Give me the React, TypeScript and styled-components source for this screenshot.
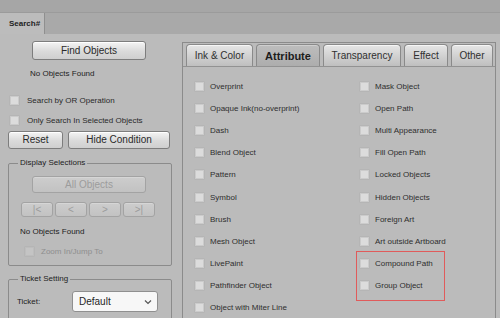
import React from 'react';
import styled, { createGlobalStyle } from 'styled-components';

const GlobalStyle = createGlobalStyle`
  html, body {
    margin: 0;
    padding: 0;
    background: #bbbbbb;
  }
  body {
    font-family: "Liberation Sans", Arial, sans-serif;
  }
`;

const Window = styled.div`
  width: 500px;
  height: 318px;
  overflow: hidden;
  background: #bbbbbb;
  display: flex;
  flex-direction: column;
  font-family: "Liberation Sans", Arial, sans-serif;
  color: #2e2e2e;
`;

const TitleStrip = styled.div`
  height: 12px;
  flex-shrink: 0;
  background: #a6a6a6;
  border-bottom: 1px solid #9b9b9b;
`;

const TabStrip = styled.div`
  height: 21px;
  flex-shrink: 0;
  background: #a9a9a9;
  display: flex;
`;

const PanelTab = styled.div`
  width: 45px;
  box-sizing: border-box;
  padding-left: 9px;
  background: #bcbcbc;
  border-right: 1px solid #8f8f8f;
  font-size: 8px;
  font-weight: bold;
  line-height: 21px;
  color: #222;
`;

const Body = styled.div`
  flex: 1;
  display: flex;
  min-height: 0;
`;

const LeftPanel = styled.div`
  width: 182px;
  flex-shrink: 0;
  padding-top: 7px;
  display: flex;
  flex-direction: column;
  align-items: flex-start;
`;

const PushButton = styled.button<{ $w: number; $h: number; $off?: boolean }>`
  width: ${(p) => p.$w}px;
  height: ${(p) => p.$h}px;
  flex-shrink: 0;
  box-sizing: border-box;
  padding: 0;
  margin: 0;
  border: 1px solid ${(p) => (p.$off ? '#a3a3a3' : '#7d7d7d')};
  border-radius: 3px;
  background: ${(p) =>
    p.$off
      ? 'linear-gradient(#cdcdcd, #c2c2c2)'
      : 'linear-gradient(#f4f4f4, #dadada 55%, #cfcfcf)'};
  box-shadow: ${(p) => (p.$off ? 'inset 0 1px 0 #d6d6d6' : 'inset 0 1px 0 #ffffff')};
  font-family: "Liberation Sans", Arial, sans-serif;
  font-size: 10px;
  line-height: 1;
  color: ${(p) => (p.$off ? '#9c9c9c' : '#2a2a2a')};
`;

const FindButton = styled(PushButton)`
  margin-left: 32px;
`;

const Note = styled.div<{ $left: number; $top: number }>`
  flex-shrink: 0;
  margin: ${(p) => p.$top}px 0 0 ${(p) => p.$left}px;
  font-size: 8px;
  line-height: 10px;
  color: #222;
`;

const CheckRow = styled.label<{ $left: number; $top: number; $gap: number; $off?: boolean }>`
  flex-shrink: 0;
  display: flex;
  align-items: center;
  height: 12px;
  margin: ${(p) => p.$top}px 0 0 ${(p) => p.$left}px;
  gap: ${(p) => p.$gap}px;
  font-size: 8px;
  color: ${(p) => (p.$off ? '#8e8e8e' : '#2a2a2a')};
  white-space: nowrap;
`;

const Box = styled.span<{ $off?: boolean }>`
  width: 9px;
  height: 9px;
  box-sizing: border-box;
  flex-shrink: 0;
  background: ${(p) => (p.$off ? '#c4c4c4' : '#dcdcdc')};
  border: 1px solid ${(p) => (p.$off ? '#bdbdbd' : '#cbcbcb')};
  box-shadow: 0 0 0 0.5px #b0b0b0;
`;

const ButtonRow = styled.div<{ $left: number; $top: number; $gap: number }>`
  flex-shrink: 0;
  display: flex;
  gap: ${(p) => p.$gap}px;
  margin: ${(p) => p.$top}px 0 0 ${(p) => p.$left}px;
`;

const Group = styled.fieldset<{ $top: number }>`
  flex-shrink: 0;
  width: 164px;
  box-sizing: border-box;
  margin: ${(p) => p.$top}px 0 0 8px;
  padding: 0 0 8px 0;
  border: 1px solid #8b8b8b;
  border-radius: 2px;
  min-inline-size: 0;
`;

const GroupTitle = styled.legend`
  margin-left: 9px;
  padding: 0 2px;
  font-size: 8px;
  line-height: 10px;
  color: #222;
`;

const GroupBody = styled.div<{ $pad: number }>`
  display: flex;
  flex-direction: column;
  align-items: flex-start;
  padding-top: ${(p) => p.$pad}px;
`;

const AllButton = styled(PushButton)`
  margin-left: 23px;
  font-size: 10px;
`;

const TicketRow = styled.div`
  display: flex;
  align-items: center;
  margin-left: 8px;
`;

const TicketLabel = styled.span`
  width: 55px;
  font-size: 8px;
  color: #222;
`;

const Select = styled.div`
  width: 86px;
  height: 21px;
  box-sizing: border-box;
  border: 1px solid #8f8f8f;
  border-radius: 3px;
  background: #f7f7f7;
  display: flex;
  align-items: center;
  justify-content: space-between;
  padding: 0 5px 0 6px;
  font-size: 10px;
  color: #262626;
`;

const RightPanel = styled.div`
  width: 314px;
  margin-top: 8px;
  box-sizing: border-box;
  border: 1px solid #8b8b8b;
  border-bottom: none;
  display: flex;
  flex-direction: column;
`;

const TabRow = styled.div`
  display: flex;
  gap: 3px;
  padding: 1px 0 0 3px;
  border-bottom: 1px solid #929292;
`;

const Tab = styled.div<{ $w: number; $on?: boolean }>`
  width: ${(p) => p.$w}px;
  height: 22px;
  box-sizing: border-box;
  border: 1px solid #8a8a8a;
  border-bottom: none;
  border-radius: 4px 4px 0 0;
  background: ${(p) =>
    p.$on ? 'linear-gradient(#bdbdbd, #adadad)' : 'linear-gradient(#e6e6e6, #d2d2d2 50%, #bfbfbf)'};
  box-shadow: inset 0 1px 0 ${(p) => (p.$on ? '#cfcfcf' : '#f6f6f6')};
  display: flex;
  align-items: center;
  justify-content: center;
  font-size: ${(p) => (p.$on ? 11 : 10)}px;
  font-weight: ${(p) => (p.$on ? 'bold' : 'normal')};
  color: ${(p) => (p.$on ? '#1c1c1c' : '#303030')};
`;

const Options = styled.div`
  display: flex;
  padding: 8px 0 0 12px;
`;

const OptionColumn = styled.div<{ $w?: number }>`
  width: ${(p) => (p.$w ? `${p.$w}px` : 'auto')};
  display: flex;
  flex-direction: column;
`;

const Option = styled.label`
  height: 22.2px;
  flex-shrink: 0;
  display: flex;
  align-items: center;
  gap: 6px;
  font-size: 8px;
  color: #2e2e2e;
  white-space: nowrap;
`;

const Highlight = styled.div`
  position: relative;
  &::before {
    content: '';
    position: absolute;
    left: -4px;
    top: -1.5px;
    width: 87px;
    bottom: -4px;
    border: 1px solid #e05b5b;
    pointer-events: none;
  }
`;

const Chevron = () => (
  <svg width="8" height="6" viewBox="0 0 8 6">
    <path d="M1 1.5 L4 4.5 L7 1.5" fill="none" stroke="#555" strokeWidth="1.2" />
  </svg>
);

const leftOptions = [
  'Overprint',
  'Opaque Ink(no-overprint)',
  'Dash',
  'Blend Object',
  'Pattern',
  'Symbol',
  'Brush',
  'Mesh Object',
  'LivePaint',
  'Pathfinder Object',
  'Object with Miter Line',
];

const rightOptions = [
  'Mask Object',
  'Open Path',
  'Multi Appearance',
  'Fill Open Path',
  'Locked Objects',
  'Hidden Objects',
  'Foreign Art',
  'Art outside Artboard',
];

const marked = ['Compound Path', 'Group Object'];

const App: React.FC = () => {
  return (
    <Window>
      <GlobalStyle />
      <TitleStrip />
      <TabStrip>
        <PanelTab>Search#</PanelTab>
      </TabStrip>
      <Body>
        <LeftPanel>
          <FindButton $w={114} $h={19}>Find Objects</FindButton>
          <Note $left={30} $top={9}>No Objects Found</Note>
          <CheckRow $left={10} $top={15} $gap={8}>
            <Box />
            Search by OR Operation
          </CheckRow>
          <CheckRow $left={10} $top={8} $gap={8}>
            <Box />
            Only Search In Selected Objects
          </CheckRow>
          <ButtonRow $left={8} $top={5} $gap={5}>
            <PushButton $w={55} $h={18}>Reset</PushButton>
            <PushButton $w={102} $h={18}>Hide Condition</PushButton>
          </ButtonRow>

          <Group $top={9}>
            <GroupTitle>Display Selections</GroupTitle>
            <GroupBody $pad={8}>
              <AllButton $w={114} $h={17} $off>All Objects</AllButton>
              <ButtonRow $left={12} $top={9} $gap={2}>
                <PushButton $w={32} $h={15} $off>|&lt;</PushButton>
                <PushButton $w={32} $h={15} $off>&lt;</PushButton>
                <PushButton $w={32} $h={15} $off>&gt;</PushButton>
                <PushButton $w={32} $h={15} $off>&gt;|</PushButton>
              </ButtonRow>
              <Note $left={11} $top={10}>No Objects Found</Note>
              <CheckRow $left={16} $top={8} $gap={7} $off>
                <Box $off />
                Zoom In/Jump To
              </CheckRow>
            </GroupBody>
          </Group>

          <Group $top={8}>
            <GroupTitle>Ticket Setting</GroupTitle>
            <GroupBody $pad={7}>
              <TicketRow>
                <TicketLabel>Ticket:</TicketLabel>
                <Select>
                  Default
                  <Chevron />
                </Select>
              </TicketRow>
            </GroupBody>
          </Group>
        </LeftPanel>

        <RightPanel>
          <TabRow>
            <Tab $w={67}>Ink &amp; Color</Tab>
            <Tab $w={64} $on>Attribute</Tab>
            <Tab $w={78}>Transparency</Tab>
            <Tab $w={44}>Effect</Tab>
            <Tab $w={42}>Other</Tab>
          </TabRow>
          <Options>
            <OptionColumn $w={165}>
              {leftOptions.map((t) => (
                <Option key={t}>
                  <Box />
                  {t}
                </Option>
              ))}
            </OptionColumn>
            <OptionColumn>
              {rightOptions.map((t) => (
                <Option key={t}>
                  <Box />
                  {t}
                </Option>
              ))}
              <Highlight>
                {marked.map((t) => (
                  <Option key={t}>
                    <Box />
                    {t}
                  </Option>
                ))}
              </Highlight>
            </OptionColumn>
          </Options>
        </RightPanel>
      </Body>
    </Window>
  );
};

export default App;
